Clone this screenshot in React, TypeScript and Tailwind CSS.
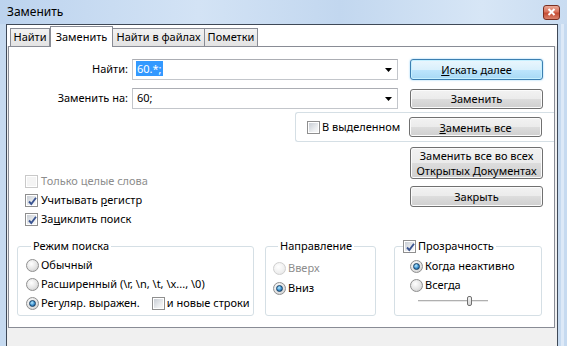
import React from "react";

function CheckBox({ checked = false, disabled = false }: { checked?: boolean; disabled?: boolean }) {
  return (
    <span
      className={`relative inline-flex h-[13px] w-[13px] shrink-0 items-center justify-center border ${
        disabled ? "border-[#c9c9c9] bg-white" : "border-[#8f8f8f] bg-white"
      }`}
    >
      <span
        className={`h-[9px] w-[9px] ${
          disabled ? "bg-[#f4f4f4]" : "bg-[linear-gradient(135deg,#c9ced5_0%,#eef0f2_70%,#f7f7f7_100%)]"
        }`}
      />
      {checked && (
        <svg className="absolute left-[1px] top-[1px]" width="11" height="11" viewBox="0 0 11 11">
          <path d="M2 5.5 L4.3 8 L9 1.8" fill="none" stroke="#3a5491" strokeWidth="1.9" />
        </svg>
      )}
    </span>
  );
}

function Radio({ checked = false, disabled = false }: { checked?: boolean; disabled?: boolean }) {
  return (
    <span
      className={`inline-flex h-[13px] w-[13px] shrink-0 items-center justify-center rounded-full border ${
        disabled
          ? "border-[#cfcfcf] bg-[radial-gradient(circle_at_40%_35%,#ffffff_0%,#efefef_60%,#e0e0e0_100%)]"
          : "border-[#8f8f8f] bg-[radial-gradient(circle_at_40%_35%,#ffffff_0%,#e4e4e4_55%,#c4c4c4_100%)]"
      }`}
    >
      {checked && (
        <span className="h-[7px] w-[7px] rounded-full border border-[#163f63] bg-[radial-gradient(circle_at_40%_35%,#b9ecff_0%,#3a8fd0_55%,#124a78_100%)]" />
      )}
    </span>
  );
}

function Button({
  children,
  primary = false,
  className = "",
}: {
  children: React.ReactNode;
  primary?: boolean;
  className?: string;
}) {
  return (
    <div
      className={`flex w-[133px] shrink-0 items-center justify-center rounded-[3px] border text-center leading-[15px] ${
        primary
          ? "border-[#3c7fb1] bg-[linear-gradient(#eaf6fd_0%,#d9f0fc_50%,#bee6fd_50%,#a7d9f5_100%)] shadow-[inset_0_0_0_1px_#c5f0ff,0_0_2px_#7fc8f5]"
          : "border-[#707070] bg-[linear-gradient(#f2f2f2_0%,#ebebeb_50%,#dddddd_50%,#cfcfcf_100%)] shadow-[inset_0_0_0_1px_#fbfbfb]"
      } ${className}`}
    >
      <div>{children}</div>
    </div>
  );
}

function Combo({ children }: { children: React.ReactNode }) {
  return (
    <div className="ml-[4px] flex h-[21px] w-[266px] items-center border border-[#c3c6cb] border-t-[#abadb3] bg-white pl-[3px] pr-[5px]">
      <div className="flex-1">{children}</div>
      <svg width="7" height="4" viewBox="0 0 7 4">
        <path d="M0 0 H7 L3.5 4 Z" fill="#000" />
      </svg>
    </div>
  );
}

export default function App() {
  return (
    <div className="flex h-[346px] w-[567px] flex-col overflow-hidden whitespace-nowrap bg-[#c6daf0] font-['Noto_Sans',sans-serif] text-[11px] text-black">
      {/* title bar */}
      <div className="flex h-[24px] shrink-0 items-center bg-[linear-gradient(to_right,#bcd3ee_0%,#d3e3f5_35%,#c2d7ef_60%,#d7e6f6_85%,#c9dcf1_100%)] pl-[7px] pr-[7px]">
        <span className="text-[12px] leading-[16px]">Заменить</span>
        <div className="ml-auto flex h-[15px] w-[17px] items-center justify-center rounded-[3px] border border-[#7a2f22] bg-[linear-gradient(#eba997_0%,#d8725c_45%,#c44b33_55%,#d9826c_100%)]">
          <svg width="9" height="8" viewBox="0 0 9 8">
            <path d="M1.5 1 L7.5 7 M7.5 1 L1.5 7" stroke="#fff" strokeWidth="2" />
          </svg>
        </div>
      </div>

      <div className="flex flex-1">
        <div className="w-[6px] shrink-0 bg-[#c6daf0]" />
        {/* client */}
        <div className="flex w-[552px] flex-col border border-b-0 border-[#3f4957] bg-[#f0f0f0]">
          <div className="flex h-[21px] shrink-0 items-end bg-white pl-[3px]">
            <div className="flex h-[18px] w-[40px] items-center justify-center border border-b-0 border-[#898c95] bg-[linear-gradient(#f2f2f2,#e3e3e3)]">
              Найти
            </div>
            <div className="relative z-10 -mb-[1px] flex h-[21px] w-[63px] items-start justify-center border border-b-0 border-[#898c95] bg-white pt-[2px]">
              Заменить
            </div>
            <div className="flex h-[18px] w-[92px] items-center justify-center border border-b-0 border-l-0 border-[#898c95] bg-[linear-gradient(#f2f2f2,#e3e3e3)]">
              Найти в файлах
            </div>
            <div className="flex h-[18px] w-[53px] items-center justify-center border border-b-0 border-l-0 border-[#898c95] bg-[linear-gradient(#f2f2f2,#e3e3e3)]">
              Пометки
            </div>
            <div className="h-full flex-1 bg-white" />
          </div>

          {/* panel */}
          <div className="ml-[1px] mr-[2px] flex h-[282px] shrink-0 flex-col border border-[#898c95] bg-white">
            {/* find */}
            <div className="mt-[12px] flex h-[21px] items-center">
              <div className="w-[119px] text-right">Найти:</div>
              <Combo>
                <span className="bg-[#3399ff] px-[1px] text-white">60.*;</span>
              </Combo>
              <Button primary className="ml-[12px] h-[21px]">
                <span className="underline">И</span>скать далее
              </Button>
            </div>
            {/* replace */}
            <div className="mt-[8px] flex h-[21px] items-center">
              <div className="w-[119px] text-right">Заменить на:</div>
              <Combo>
                <span className="pl-[1px]">60;</span>
              </Combo>
              <Button className="ml-[12px] h-[20px]">Заменить</Button>
            </div>
            {/* in selection */}
            <div className="ml-[286px] mt-[3px] flex h-[30px] items-center rounded-l-[3px] border border-r-0 border-[#d5dfe5] pl-[11px]">
              <CheckBox />
              <span className="ml-[2px] w-[87px]">В выделенном</span>
              <Button className="h-[20px]">
                <span className="underline">З</span>аменить все
              </Button>
            </div>
            {/* options + buttons */}
            <div className="mt-[5px] flex">
              <div className="flex w-[401px] flex-col pl-[16px] pt-[25px]">
                <div className="flex h-[19px] items-center text-[#8d8d8d]">
                  <CheckBox disabled />
                  <span className="ml-[3px]">Только целые слова</span>
                </div>
                <div className="flex h-[19px] items-center">
                  <CheckBox checked />
                  <span className="ml-[3px]">
                    Учитывать <span className="underline">р</span>егистр
                  </span>
                </div>
                <div className="flex h-[19px] items-center">
                  <CheckBox checked />
                  <span className="ml-[3px]">
                    За<span className="underline">ц</span>иклить поиск
                  </span>
                </div>
              </div>
              <div className="flex flex-col">
                <Button className="h-[32px]">
                  Заменить все во всех
                  <br />
                  Открытых <span className="underline">Д</span>окументах
                </Button>
                <Button className="mt-[7px] h-[21px]">Закрыть</Button>
              </div>
            </div>
            {/* groups */}
            <div className="mt-[9px] flex pl-[8px]">
              <fieldset className="h-[78px] w-[237px] rounded-[3px] border border-[#d5dfe5] pl-[8px]">
                <legend className="ml-[5px] px-[2px] leading-[16px]">Режим поиска</legend>
                <div className="mt-[2px] flex h-[19px] items-center">
                  <Radio />
                  <span className="ml-[2px]">Обычный</span>
                </div>
                <div className="flex h-[19px] items-center">
                  <Radio />
                  <span className="ml-[2px]">Расширенный (\r, \n, \t, \x..., \0)</span>
                </div>
                <div className="flex h-[19px] items-center">
                  <Radio checked />
                  <span className="ml-[2px]">Регуляр. выражен.</span>
                  <span className="ml-[12px] flex">
                    <CheckBox />
                  </span>
                  <span className="ml-[2px]">и новые строки</span>
                </div>
              </fieldset>
              <fieldset className="ml-[11px] h-[78px] w-[111px] rounded-[3px] border border-[#d5dfe5] pl-[7px]">
                <legend className="ml-[5px] px-[2px] leading-[16px]">Направление</legend>
                <div className="mt-[4px] flex h-[20px] items-center text-[#8d8d8d]">
                  <Radio disabled />
                  <span className="ml-[2px]">Вверх</span>
                </div>
                <div className="flex h-[20px] items-center">
                  <Radio checked />
                  <span className="ml-[2px]">Вниз</span>
                </div>
              </fieldset>
              <fieldset className="ml-[18px] h-[78px] w-[148px] rounded-[3px] border border-[#d5dfe5] pl-[15px]">
                <legend className="-ml-[7px] flex items-center bg-white pr-[2px] leading-[16px]">
                  <CheckBox checked />
                  <span className="ml-[2px]">Прозрачность</span>
                </legend>
                <div className="mt-[3px] flex h-[19px] items-center">
                  <Radio checked />
                  <span className="ml-[2px]">Когда неактивно</span>
                </div>
                <div className="flex h-[19px] items-center">
                  <Radio />
                  <span className="ml-[2px]">Всегда</span>
                </div>
                <div className="ml-[8px] flex h-[12px] w-[70px] items-center">
                  <div className="h-[2px] w-[49px] border-y border-[#b0b0b0] border-b-[#e8e8e8]" />
                  <div className="h-[10px] w-[5px] rounded-[2px] border border-[#707070] bg-[linear-gradient(#f4f4f4,#d6d6d6)]" />
                  <div className="h-[2px] flex-1 border-y border-[#b0b0b0] border-b-[#e8e8e8]" />
                </div>
              </fieldset>
            </div>
          </div>
        </div>
        <div className="flex w-[9px] shrink-0 bg-[#c6daf0]">
          <div className="ml-[3px] w-[3px] bg-[#dde9f7]" />
        </div>
      </div>
    </div>
  );
}
